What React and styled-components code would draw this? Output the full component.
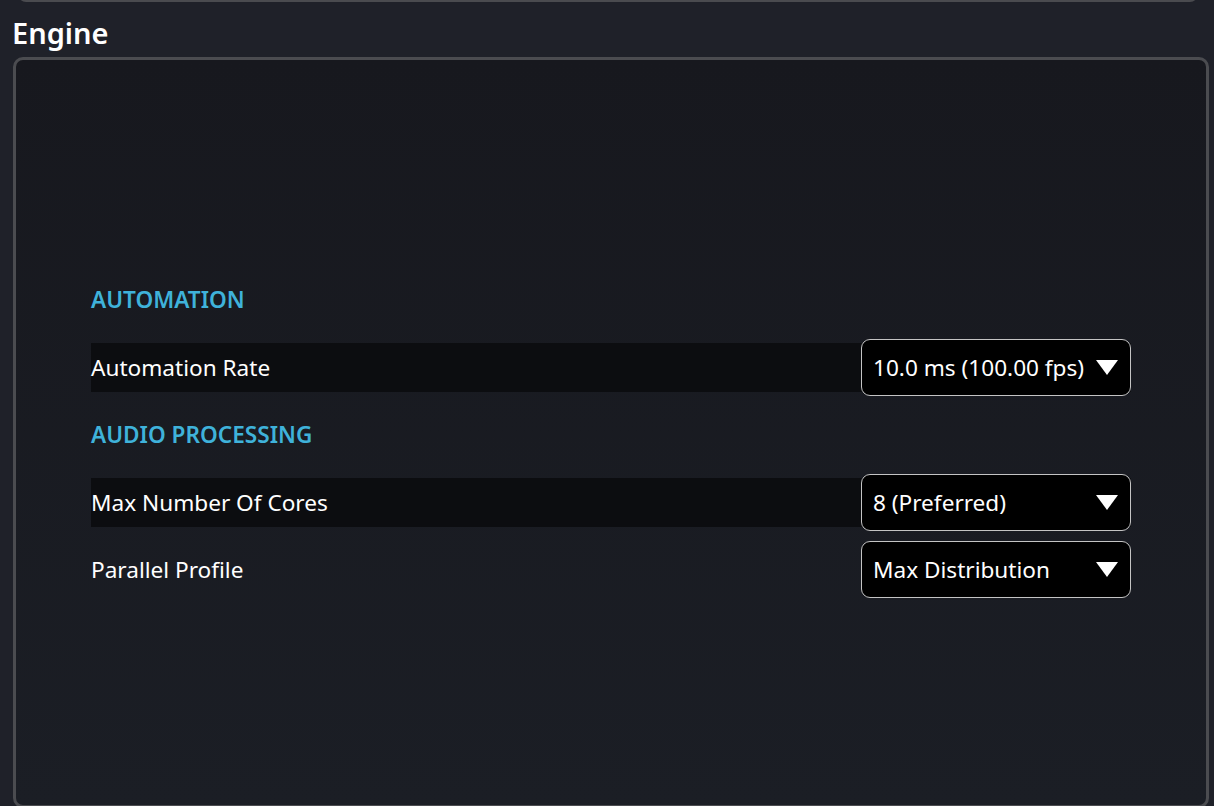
import React from "react";
import styled, { createGlobalStyle } from "styled-components";

const Global = createGlobalStyle`
  html, body { margin: 0; padding: 0; background: #1f2129; overflow: hidden; }
  body { font-family: "Noto Sans", "Open Sans", sans-serif; color: #fff; }
`;

const Page = styled.div`
  width: 1214px;
  height: 806px;
  padding: 0 5px 0 13px;
  box-sizing: border-box;
  overflow: hidden;
`;

const PrevPanel = styled.div`
  height: 40px;
  margin: -38px 11px 0 5px;
  border: 2px solid #4a4b4f;
  border-radius: 8px;
  background: #17181f;
  box-sizing: border-box;
`;

const Heading = styled.h2`
  margin: 0 0 0 -1px;
  padding: 12px 0 5px 0;
  font-size: 29px;
  font-weight: 600;
  line-height: 38px;
  color: #fff;
`;

const Panel = styled.div`
  height: 751px;
  box-sizing: border-box;
  border: 3px solid #4b4c50;
  border-radius: 10px;
  background: linear-gradient(to bottom, #17181e 0%, #1b1e25 100%);
  padding: 4px 75px 0 75px;
  display: flex;
  flex-direction: column;
  justify-content: center;
  gap: 10.5px;
`;

const SectionTitle = styled.div`
  height: 57px;
  flex: none;
  display: flex;
  align-items: center;
  font-size: 22.6px;
  font-weight: 600;
  color: #3fb2da;
`;

const Row = styled.div`
  height: 57px;
  flex: none;
  display: flex;
  align-items: center;
  justify-content: space-between;
  background: ${(p) =>
    p.$shade
      ? "linear-gradient(to bottom, transparent 3.5px, #0c0d10 3.5px, #0c0d10 calc(100% - 4px), transparent calc(100% - 4px))"
      : "transparent"};
`;

const Label = styled.span`
  font-size: 22.6px;
  color: #fff;
`;

const Select = styled.div`
  width: 270px;
  height: 57px;
  box-sizing: border-box;
  border: 1.5px solid #c4c4c4;
  border-radius: 9px;
  background: #000;
  display: flex;
  align-items: center;
  justify-content: space-between;
  padding: 0 12px 0 11px;
  font-size: 22.6px;
  color: #fff;
`;

const Arrow = () => (
  <svg width="22" height="15" viewBox="0 0 22 15">
    <polygon points="0,0 22,0 11,15" fill="#fff" />
  </svg>
);

const Dropdown = ({ value }) => (
  <Select>
    <span>{value}</span>
    <Arrow />
  </Select>
);

export default function App() {
  return (
    <>
      <Global />
      <Page>
        <PrevPanel />
        <Heading>Engine</Heading>
        <Panel>
          <SectionTitle>AUTOMATION</SectionTitle>
          <Row $shade>
            <Label>Automation Rate</Label>
            <Dropdown value="10.0 ms (100.00 fps)" />
          </Row>
          <SectionTitle>AUDIO PROCESSING</SectionTitle>
          <Row $shade>
            <Label>Max Number Of Cores</Label>
            <Dropdown value="8 (Preferred)" />
          </Row>
          <Row>
            <Label>Parallel Profile</Label>
            <Dropdown value="Max Distribution" />
          </Row>
        </Panel>
      </Page>
    </>
  );
}
